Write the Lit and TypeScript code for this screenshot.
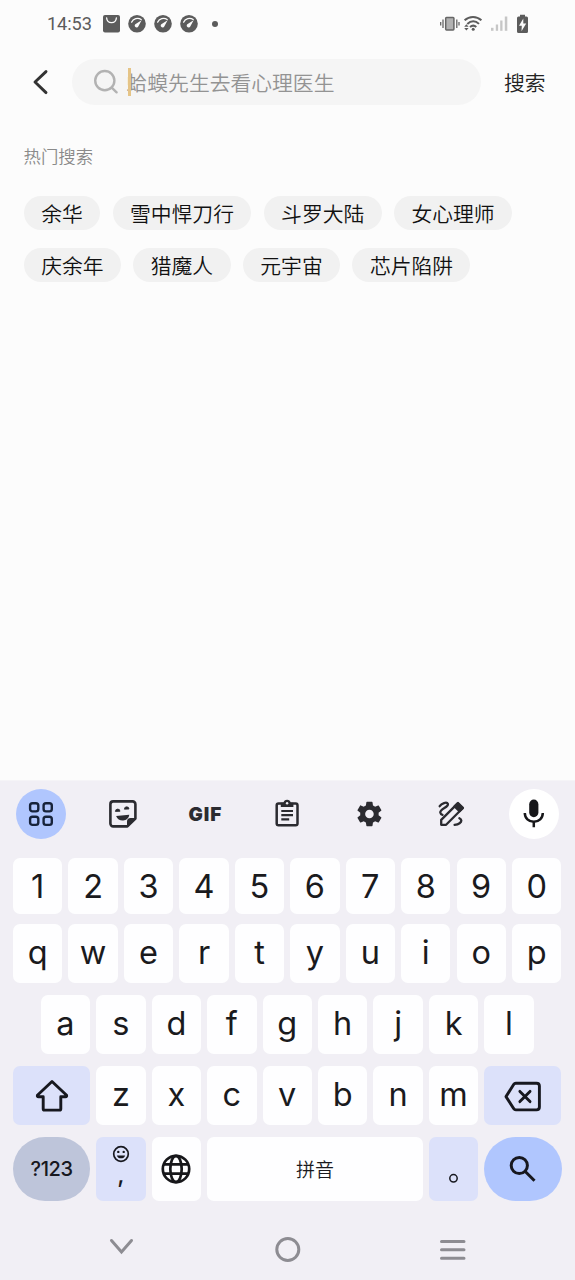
import { LitElement, html, css } from "lit";
import { customElement } from "lit/decorators.js";

const gauge = () => html`<svg class="gauge" width="18" height="18" viewBox="0 0 18 18">
  <circle cx="9" cy="8.800" r="8.800" fill="#5c5c5c" />
  <path d="M3.600 7.200C5 3.600 10 2.200 13.200 4.600" fill="none" stroke="#fcfcfc" stroke-width="1.300" stroke-linecap="round" />
  <path d="M13.600 5.200L10.400 11.200A1.900 1.900 0 1 1 7.700 8.900Z" fill="#fcfcfc" />
</svg>`;

const toolIcons = {
  grid: html`<svg width="50" height="50" viewBox="0 0 50 50" fill="none" stroke="#17233b" stroke-width="2.400">
    <rect x="14.100" y="14.200" width="8.200" height="8.200" rx="2.400" /><rect x="27.600" y="14.200" width="8.200" height="8.200" rx="2.400" />
    <rect x="14.100" y="27.700" width="8.200" height="8.200" rx="2.400" /><rect x="27.600" y="27.700" width="8.200" height="8.200" rx="2.400" />
  </svg>`,
  sticker: html`<svg width="50" height="50" viewBox="0 0 50 50">
    <path d="M15.200 12.400H34.600A2.800 2.800 0 0 1 37.400 15.200V29.600L29.400 37.400H15.200A2.800 2.800 0 0 1 12.400 34.600V15.200A2.800 2.800 0 0 1 15.200 12.400Z" fill="none" stroke="#2b2b30" stroke-width="2.600" stroke-linejoin="round" />
    <path d="M29 38V32.500A3.500 3.500 0 0 1 32.500 29H38Z" fill="#2b2b30" />
    <path d="M18.200 26.400H31.400C30.800 29.800 28 31.600 24.900 31.600C21.800 31.600 19.200 29.600 18.200 26.400Z" fill="#2b2b30" transform="rotate(-5 25 28)" />
    <path d="M17.400 22.500A2.300 2.300 0 0 1 22 22.300Z M26.400 20.200A2.300 2.300 0 0 1 31 20Z" fill="#2b2b30" stroke="#2b2b30" stroke-width=".8" />
  </svg>`,
  clipboard: html`<svg width="50" height="50" viewBox="0 0 50 50">
    <rect x="14.700" y="14.600" width="20.800" height="21.600" rx="1.800" fill="none" stroke="#2b2b30" stroke-width="2.500" />
    <path d="M18.800 13.800H21.400A3.800 3.800 0 0 1 28.800 13.800H31.400V18.100H18.800Z" fill="#2b2b30" />
    <circle cx="25.100" cy="14.200" r="1.200" fill="#f1eff5" />
    <path d="M19.300 22H31M19.300 26.200H31M19.300 30.400H27.200" stroke="#2b2b30" stroke-width="2.200" />
  </svg>`,
  settings: html`<svg width="50" height="50" viewBox="0 0 24 24"><path transform="translate(4.650 4.900) scale(.59)" fill="#2b2b30" d="M19.43 12.98c.04-.32.07-.64.07-.98s-.03-.66-.07-.98l2.11-1.65c.19-.15.24-.42.12-.64l-2-3.46c-.12-.22-.39-.3-.61-.22l-2.49 1c-.52-.4-1.08-.73-1.69-.98l-.38-2.65C14.460 2.180 14.250 2 14 2h-4c-.25 0-.46.18-.49.42l-.38 2.65c-.61.25-1.170.59-1.690.98l-2.490-1c-.23-.09-.49 0-.61.22l-2 3.460c-.13.22-.07.49.12.64l2.110 1.650c-.04.32-.07.65-.07.98s.03.66.07.98l-2.110 1.650c-.19.15-.24.42-.12.64l2 3.460c.12.22.39.3.61.22l2.490-1c.52.4 1.080.73 1.690.98l.38 2.650c.03.24.24.42.49.42h4c.25 0 .46-.18.49-.42l.38-2.650c.61-.25 1.170-.59 1.690-.98l2.490 1c.23.09.49 0 .61-.22l2-3.460c.12-.22.07-.49-.12-.64l-2.110-1.650zM12 15.500c-1.930 0-3.500-1.570-3.500-3.500s1.570-3.500 3.500-3.500 3.500 1.570 3.500 3.500-1.570 3.500-3.500 3.500z" /></svg>`,
  draw: html`<svg width="50" height="50" viewBox="1 0 50 50" fill="none" stroke="#2b2b30" stroke-width="2.300">
    <path d="M15.200 35.800V30.900L31.700 14.400L36.600 19.300L20.100 35.800Z" stroke-linejoin="round" />
    <path d="M28.600 17.400L32 14L36.900 18.900L33.500 22.300Z" fill="#2b2b30" stroke-linejoin="round" />
    <path d="M13.700 17.200C15.400 14.600 20.800 12.200 21.900 15C22.900 18.200 13.700 19.800 14.300 23.600C14.500 24.800 15.300 25.500 16.500 25.800" stroke-linecap="round" />
    <path d="M33.400 29.200C35.900 30.400 36 32.600 33.600 34.300C32.200 35.300 30.600 35.700 28.600 35.900" stroke-linecap="round" />
  </svg>`,
  mic: html`<svg width="50" height="50" viewBox="0 0 50 50">
    <rect x="20.200" y="10.600" width="9.200" height="17.600" rx="4.600" fill="#17171a" />
    <path d="M15.800 24C15.800 29.200 19.800 32.800 24.800 32.800S33.800 29.200 33.800 24M24.800 33V38.300" fill="none" stroke="#17171a" stroke-width="2.500" />
  </svg>`,
};

const chipRows = [
  ["余华", "雪中悍刀行", "斗罗大陆", "女心理师"],
  ["庆余年", "猎魔人", "元宇宙", "芯片陷阱"],
];

@customElement("app-root")
export class AppRoot extends LitElement {
  static styles = css`
    :host { display: flex; flex-direction: column; width: 575px; height: 1280px; overflow: hidden; background: #fcfcfc; font-family: "Noto Sans CJK SC", sans-serif; color: #222; }
    * { box-sizing: border-box; }
    svg { display: block; flex: none; }
    .status { display: flex; align-items: center; height: 47px; padding: 0 46px 0 47px; }
    .time { font: 400 18.200px/24px Roboto, sans-serif; color: #5c5c5c; width: 56px; letter-spacing: -0.1px; }
    .gauge { margin-left: 8px; }
    .dot { width: 6px; height: 6px; border-radius: 50%; background: #5c5c5c; margin-left: 14px; }
    .grow { flex: 1; }
    .search { display: flex; align-items: center; height: 46px; margin-top: 12px; }
    .back { margin-left: 30px; }
    .field { position: relative; display: flex; align-items: center; width: 409px; height: 46px; margin-left: 21.500px; padding-left: 20.500px; border-radius: 23px; background: #f5f5f5; }
    .hint { font-size: 20.800px; line-height: 30px; font-weight: 350; color: #939393; margin-left: 6.500px; white-space: nowrap; padding-bottom: 1px; }
    .caret { position: absolute; left: 56px; top: 9px; width: 3px; height: 28px; background: #e5c487; }
    .go { font-size: 20.800px; line-height: 30px; font-weight: 350; margin-left: 23.500px; padding-bottom: 1px; color: #222; }
    .hot { margin: 38px 0 0 23.500px; font-size: 17.400px; line-height: 26px; font-weight: 350; color: #8a8a8a; }
    .chips { display: flex; flex-direction: column; gap: 18px; margin: 27px 0 0 23.800px; }
    .line { display: flex; gap: 12.400px; }
    .chip { height: 34px; border-radius: 17px; background: #f1f1f1; padding: 1px 17.400px 0; font-size: 20.800px; line-height: 33px; font-weight: 350; white-space: nowrap; color: #111; }
    .keyboard { display: flex; flex-direction: column; height: 500px; margin-top: auto; background: #f1eff5; border-top: 1px solid #f5f4f7; }
    .tools { display: flex; justify-content: space-between; height: 50px; margin: 8px 16px 0; }
    .tool { display: flex; align-items: center; justify-content: center; width: 50px; height: 50px; border-radius: 50%; }
    .tool.on { background: #b0c6fe; }
    .tool.voice { background: #fff; }
    .gif { font: 900 19px/24px Inter, sans-serif; color: #2b2b30; letter-spacing: 0.9px; padding-top: 1px; }
    .keys { display: flex; flex-direction: column; margin: 19px 13px 0; }
    .row { display: flex; gap: 6.050px; height: 59.300px; margin-bottom: 11.700px; }
    .row.middle { margin-left: 27.800px; }
    .row.digits { height: 56px; margin-bottom: 10px; }
    .row.bottom { height: 64px; margin: 0; }
    .key { display: flex; flex: none; align-items: center; justify-content: center; width: 49.400px; border-radius: 7px; background: #fefeff; color: #1a1a1d; font: 380 32.500px/40px Inter, sans-serif; padding-bottom: 2px; }
    .digits .key { padding: 2px 0 0; }
    .key.wide { width: 77.200px; }
    .key.tint { background: #dce1fa; padding: 0; }
    .key.sym { background: #bec5da; border-radius: 32px; font: 500 20px/26px Inter, sans-serif; letter-spacing: -0.4px; padding: 0; color: #17181f; }
    .key.enter { background: #b0c6fe; border-radius: 32px; padding: 0; }
    .key.space { width: 215.900px; font: 350 19px/28px "Noto Sans CJK SC", sans-serif; padding: 0; }
    .key.plain { padding: 0; }
    .key.comma { flex-direction: column; justify-content: flex-start; padding-top: 8px; }
    .mark { font: 500 24px/24px Inter, sans-serif; margin-top: 0; }
    .nav { display: flex; justify-content: space-between; align-items: center; margin: 33px 104px 0 102px; height: 30px; }
  `;

  private row(keys: string) {
    return [...keys].map((k) => html`<div class="key">${k}</div>`);
  }

  render() {
    return html`
      <div class="status">
        <div class="time">14:53</div>
        <svg width="17" height="18" viewBox="0 0 17 18"><rect width="17" height="17.600" rx="2" fill="#5c5c5c" /><path d="M3.600 2.800C4 9.300 13 9.300 13.400 2.800" fill="none" stroke="#fcfcfc" stroke-width="1.300" stroke-linecap="round" /></svg>
        ${gauge()}${gauge()}${gauge()}
        <div class="dot"></div>
        <div class="grow"></div>
        <svg width="89" height="22" viewBox="440 12.500 89 22">
          <rect x="445.700" y="17" width="8.200" height="12.400" rx=".8" fill="#b2b2b2" stroke="#666" stroke-width="1.500" />
          <path d="M443 19V27.500M440.700 21.500V25M456.800 19V27.500M459 21.500V25" stroke="#666" stroke-width="1.300" />
          <g fill="none" stroke="#5c5c5c" stroke-width="2"><path d="M464.600 19.800C469.500 15.300 476.500 15.300 481.400 19.800M467.300 23.400C471 20 475.500 20 479 23.400M470 26.600C472 24.800 474.400 24.800 476.300 26.600" /></g>
          <circle cx="473.200" cy="28.800" r="1.500" fill="#5c5c5c" />
          <path d="M464.200 26.200L466.400 23.700L468.600 26.200ZM464.200 27.500H468.600L466.400 30Z" fill="#5c5c5c" />
          <g fill="#c6c6c6"><rect x="491" y="27.300" width="2.500" height="3" /><rect x="495.800" y="24" width="2.300" height="6.300" /><rect x="500.200" y="20" width="2.300" height="10.300" /><rect x="504.800" y="16" width="2.500" height="14.300" /></g>
          <path d="M520 14.200H525V16H526.500A1.500 1.500 0 0 1 528 17.500V31A1.500 1.500 0 0 1 526.500 32.500H518.500A1.500 1.500 0 0 1 517 31V17.500A1.500 1.500 0 0 1 518.500 16H520Z" fill="#5c5c5c" />
          <path d="M523.300 18L519 25.300H521.800L521.500 30.800L526.200 23H523.300Z" fill="#fcfcfc" />
        </svg>
      </div>
      <div class="search">
        <svg class="back" width="20" height="28" viewBox="0 0 20 28"><path d="M16 3.600L5 14L16 24.600" fill="none" stroke="#333" stroke-width="2.900" stroke-linecap="round" stroke-linejoin="round" /></svg>
        <div class="field">
          <svg width="28" height="28" viewBox="0 0 28 28" fill="none" stroke="#b2b2b2" stroke-width="2.400" stroke-linecap="round"><circle cx="12.800" cy="12.600" r="9.600" /><path d="M19.700 19.600L24.600 24.300" /></svg>
          <div class="hint">蛤蟆先生去看心理医生</div>
          <div class="caret"></div>
        </div>
        <div class="go">搜索</div>
      </div>
      <div class="hot">热门搜索</div>
      <div class="chips">
        ${chipRows.map((r) => html`<div class="line">${r.map((c) => html`<div class="chip">${c}</div>`)}</div>`)}
      </div>
      <div class="keyboard">
        <div class="tools">
          <div class="tool on">${toolIcons.grid}</div>
          <div class="tool">${toolIcons.sticker}</div>
          <div class="tool"><span class="gif">GIF</span></div>
          <div class="tool">${toolIcons.clipboard}</div>
          <div class="tool">${toolIcons.settings}</div>
          <div class="tool">${toolIcons.draw}</div>
          <div class="tool voice">${toolIcons.mic}</div>
        </div>
        <div class="keys">
          <div class="row digits">${this.row("1234567890")}</div>
          <div class="row">${this.row("qwertyuiop")}</div>
          <div class="row middle">${this.row("asdfghjkl")}</div>
          <div class="row">
            <div class="key wide tint">
              <svg width="36" height="36" viewBox="0 0 36 36" fill="none" stroke="#17181f" stroke-width="2.900" stroke-linejoin="round"><path d="M18 3.500L32.600 17.300Q33 18.800 31.500 18.800H26.800V30.700Q26.800 32.100 25.400 32.100H10.600Q9.200 32.100 9.200 30.700V18.800H4.500Q3 18.800 3.400 17.300Z" /></svg>
            </div>
            ${this.row("zxcvbnm")}
            <div class="key wide tint">
              <svg width="40" height="34" viewBox="0 0 40 34" fill="none" stroke="#17181f" stroke-width="2.900" stroke-linejoin="round" stroke-linecap="round"><path d="M12.800 4.200H33.500Q36.400 4.200 36.400 7.100V28Q36.400 30.900 33.500 30.900H12.800Q11.500 30.900 10.800 29.800L3 17.600L10.800 5.300Q11.500 4.200 12.800 4.200Z" /><path d="M16.900 12.400L27 22.600M27 12.400L16.900 22.600" /></svg>
            </div>
          </div>
          <div class="row bottom">
            <div class="key wide sym">?123</div>
            <div class="key tint comma">
              <svg width="18" height="18" viewBox="0 0 18 18"><circle cx="9" cy="9" r="7.300" fill="none" stroke="#17181f" stroke-width="1.700" /><circle cx="6.300" cy="6.900" r="1.200" fill="#17181f" /><circle cx="11.700" cy="6.900" r="1.200" fill="#17181f" /><path d="M4.900 10.400H13.100C12.400 14.300 5.600 14.300 4.900 10.400Z" fill="#17181f" /></svg>
              <span class="mark">,</span>
            </div>
            <div class="key plain">
              <svg width="30" height="30" viewBox="0 0 30 30" fill="none" stroke="#17171a" stroke-width="2.700"><circle cx="15" cy="15" r="13.200" /><ellipse cx="15" cy="15" rx="5.700" ry="13.200" /><path d="M2.800 10.300H27.200M2.800 19.700H27.200" /></svg>
            </div>
            <div class="key space">拼音</div>
            <div class="key tint">
              <svg width="12" height="32" viewBox="0 0 12 32"><circle cx="5.500" cy="25.300" r="3.700" fill="none" stroke="#17181f" stroke-width="1.500" /></svg>
            </div>
            <div class="key wide enter">
              <svg width="30" height="30" viewBox="0 0 30 30" fill="none" stroke="#17181f" stroke-width="3"><circle cx="11.300" cy="11.500" r="8.100" /><path d="M17 17.200L26.500 26.700" /></svg>
            </div>
          </div>
        </div>
        <div class="nav">
          <svg width="38" height="30" viewBox="0 0 38 30"><path d="M9.500 6.500L19.500 18L29.500 6.500" fill="none" stroke="#8d8c92" stroke-width="3" stroke-linecap="round" /></svg>
          <svg width="38" height="30" viewBox="0 0 38 30"><circle cx="19.800" cy="15.500" r="11" fill="none" stroke="#8d8c92" stroke-width="3" /></svg>
          <svg width="38" height="30" viewBox="0 0 38 30"><path d="M8.500 7.500H31M8.500 15.800H31M8.500 24.200H31" fill="none" stroke="#8d8c92" stroke-width="3" stroke-linecap="round" /></svg>
        </div>
      </div>
    `;
  }
}
